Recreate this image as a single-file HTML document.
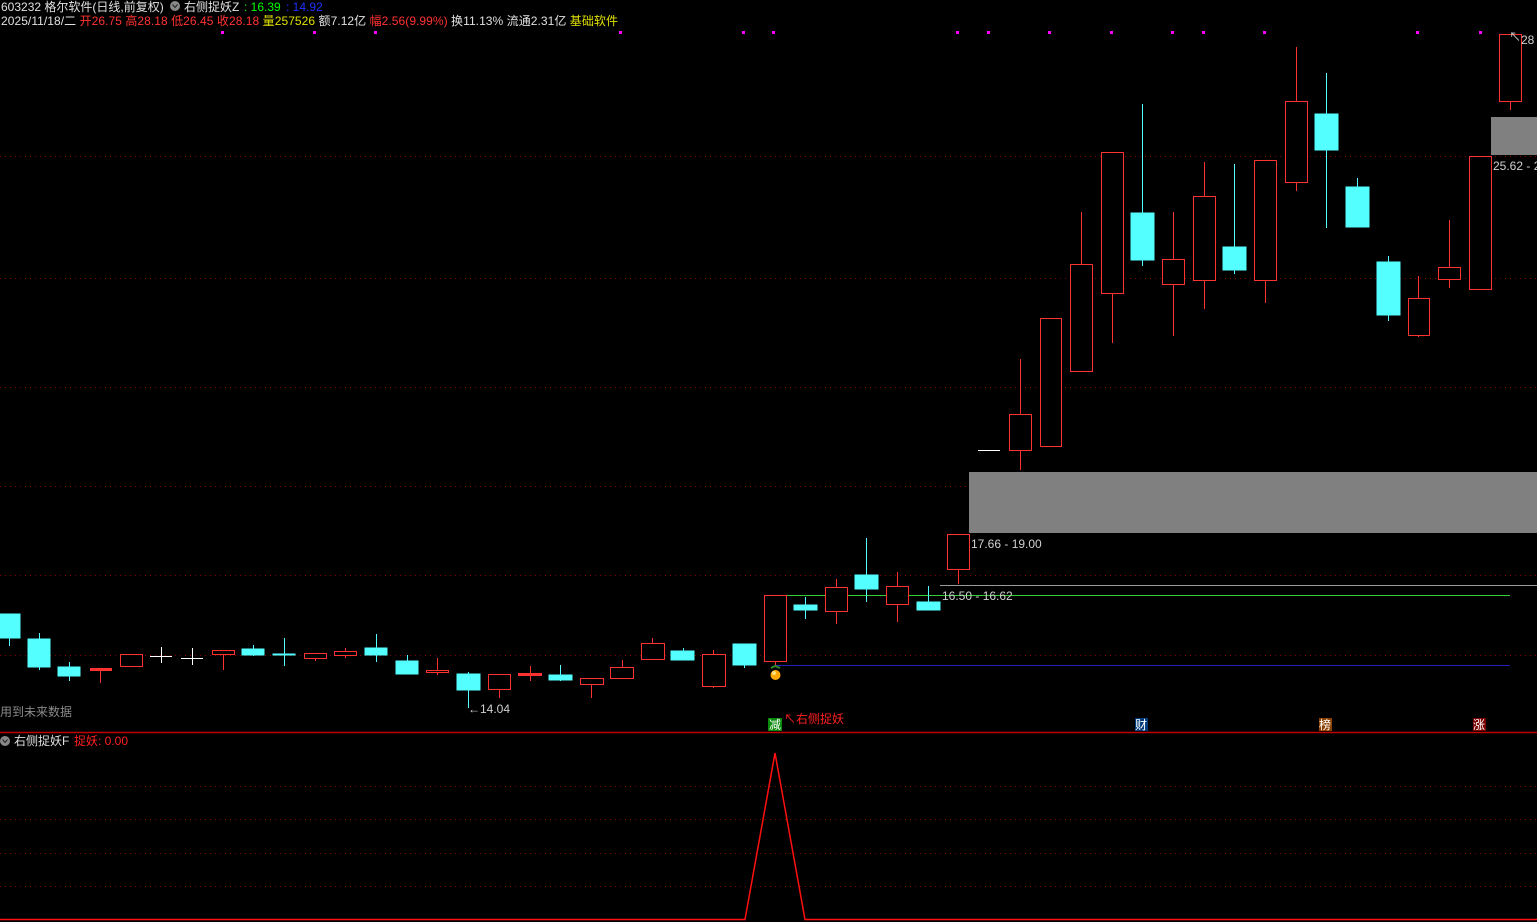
<!DOCTYPE html>
<html><head><meta charset="utf-8"><style>
html,body{margin:0;padding:0;background:#000;width:1537px;height:922px;overflow:hidden}
svg{display:block}
text{font-family:"Liberation Sans","Noto Sans CJK SC",sans-serif;font-size:12px}
</style></head><body>
<svg width="1537" height="922" xmlns="http://www.w3.org/2000/svg">
<g stroke="#800000" stroke-dasharray="1,4" stroke-width="1">
<line x1="0" y1="156.5" x2="1537" y2="156.5"/><line x1="0" y1="278.5" x2="1537" y2="278.5"/>
<line x1="0" y1="387.5" x2="1537" y2="387.5"/><line x1="0" y1="486.5" x2="1537" y2="486.5"/>
<line x1="0" y1="575.5" x2="1537" y2="575.5"/><line x1="0" y1="655.5" x2="1537" y2="655.5"/>
<line x1="0" y1="786.5" x2="1537" y2="786.5"/><line x1="0" y1="819.5" x2="1537" y2="819.5"/>
<line x1="0" y1="853.5" x2="1537" y2="853.5"/><line x1="0" y1="886.5" x2="1537" y2="886.5"/>
</g>
<rect x="969" y="472" width="568" height="61" fill="#808080"/>
<rect x="1491" y="117" width="46" height="38" fill="#808080"/>
<line x1="940" y1="585.5" x2="1537" y2="585.5" stroke="#9a9a9a"/>
<line x1="775" y1="595.5" x2="1510" y2="595.5" stroke="#33cc33"/>
<line x1="775" y1="665.5" x2="1510" y2="665.5" stroke="#2222bb"/>
<g fill="#ff00ff">
<rect x="221" y="31" width="3" height="3"/><rect x="313" y="31" width="3" height="3"/><rect x="374" y="31" width="3" height="3"/><rect x="619" y="31" width="3" height="3"/><rect x="742" y="31" width="3" height="3"/><rect x="772" y="31" width="3" height="3"/><rect x="956" y="31" width="3" height="3"/><rect x="987" y="31" width="3" height="3"/><rect x="1048" y="31" width="3" height="3"/><rect x="1110" y="31" width="3" height="3"/><rect x="1171" y="31" width="3" height="3"/><rect x="1202" y="31" width="3" height="3"/><rect x="1263" y="31" width="3" height="3"/><rect x="1416" y="31" width="3" height="3"/><rect x="1479" y="31" width="3" height="3"/>
</g>
<g stroke="#54ffff" fill="#54ffff">
<line x1="9.5" y1="614" x2="9.5" y2="646"/><rect x="0" y="614" width="20" height="24"/>
<line x1="39.5" y1="633" x2="39.5" y2="670"/><rect x="28" y="639" width="22" height="28"/>
<line x1="69.5" y1="662" x2="69.5" y2="681"/><rect x="58" y="667" width="22" height="9"/>
<line x1="253.5" y1="645" x2="253.5" y2="656"/><rect x="242" y="649" width="22" height="6"/>
<line x1="284.5" y1="638" x2="284.5" y2="666"/><rect x="273" y="654" width="22" height="1"/>
<line x1="376.5" y1="634" x2="376.5" y2="662"/><rect x="365" y="648" width="22" height="7"/>
<line x1="407.5" y1="655" x2="407.5" y2="674"/><rect x="396" y="661" width="22" height="13"/>
<line x1="468.5" y1="672" x2="468.5" y2="708"/><rect x="457" y="674" width="23" height="16"/>
<line x1="560.5" y1="665" x2="560.5" y2="681"/><rect x="549" y="675" width="23" height="5"/>
<line x1="683.5" y1="648" x2="683.5" y2="660"/><rect x="671" y="651" width="23" height="9"/>
<line x1="744.5" y1="644" x2="744.5" y2="668"/><rect x="733" y="644" width="23" height="21"/>
<line x1="805.5" y1="597" x2="805.5" y2="619"/><rect x="794" y="605" width="23" height="5"/>
<line x1="866.5" y1="538" x2="866.5" y2="602"/><rect x="855" y="575" width="23" height="14"/>
<line x1="928.5" y1="586" x2="928.5" y2="610"/><rect x="917" y="602" width="23" height="8"/>
<line x1="1142.5" y1="104" x2="1142.5" y2="266"/><rect x="1131" y="213" width="23" height="47"/>
<line x1="1234.5" y1="164" x2="1234.5" y2="274"/><rect x="1223" y="247" width="23" height="23"/>
<line x1="1326.5" y1="73" x2="1326.5" y2="228"/><rect x="1315" y="114" width="23" height="36"/>
<line x1="1357.5" y1="178" x2="1357.5" y2="227"/><rect x="1346" y="187" width="23" height="40"/>
<line x1="1388.5" y1="256" x2="1388.5" y2="321"/><rect x="1377" y="262" width="23" height="53"/>
</g>
<g stroke="#ff3232" fill="#000">
<line x1="100.5" y1="669" x2="100.5" y2="683"/><rect x="90.5" y="668.5" width="21" height="2" fill="#ff3232"/>
<rect x="120.5" y="654.5" width="22" height="12"/>
<line x1="223.5" y1="650" x2="223.5" y2="670"/><rect x="212.5" y="650.5" width="22" height="4"/>
<line x1="315.5" y1="653" x2="315.5" y2="661"/><rect x="304.5" y="653.5" width="22" height="5"/>
<line x1="345.5" y1="648" x2="345.5" y2="658"/><rect x="334.5" y="651.5" width="22" height="4"/>
<line x1="437.5" y1="658" x2="437.5" y2="675"/><rect x="426.5" y="670.5" width="22" height="2"/>
<line x1="499.5" y1="690" x2="499.5" y2="698"/><rect x="488.5" y="674.5" width="22" height="15"/>
<line x1="530.5" y1="666" x2="530.5" y2="681"/><rect x="518.5" y="673.5" width="23" height="2" fill="#ff3232"/>
<line x1="591.5" y1="685" x2="591.5" y2="698"/><rect x="580.5" y="678.5" width="23" height="6"/>
<line x1="622.5" y1="660" x2="622.5" y2="667"/><rect x="610.5" y="667.5" width="23" height="11"/>
<line x1="652.5" y1="638" x2="652.5" y2="643"/><rect x="641.5" y="643.5" width="23" height="16"/>
<line x1="713.5" y1="650" x2="713.5" y2="688"/><rect x="702.5" y="654.5" width="23" height="32"/>
<line x1="775.5" y1="661" x2="775.5" y2="665"/><rect x="764.5" y="595.5" width="22" height="66"/>
<line x1="836.5" y1="579" x2="836.5" y2="624"/><rect x="825.5" y="587.5" width="22" height="24"/>
<line x1="897.5" y1="572" x2="897.5" y2="622"/><rect x="886.5" y="586.5" width="22" height="18"/>
<line x1="958.5" y1="569" x2="958.5" y2="584"/><rect x="947.5" y="534.5" width="22" height="35"/>
<line x1="1020.5" y1="359" x2="1020.5" y2="470"/><rect x="1009.5" y="414.5" width="22" height="36"/>
<rect x="1040.5" y="318.5" width="21" height="128"/>
<line x1="1081.5" y1="212" x2="1081.5" y2="264"/><rect x="1070.5" y="264.5" width="22" height="107"/>
<line x1="1112.5" y1="293" x2="1112.5" y2="343"/><rect x="1101.5" y="152.5" width="22" height="141"/>
<line x1="1173.5" y1="212" x2="1173.5" y2="336"/><rect x="1162.5" y="259.5" width="22" height="25"/>
<line x1="1204.5" y1="162" x2="1204.5" y2="309"/><rect x="1193.5" y="196.5" width="22" height="84"/>
<line x1="1265.5" y1="280" x2="1265.5" y2="303"/><rect x="1254.5" y="160.5" width="22" height="120"/>
<line x1="1296.5" y1="47" x2="1296.5" y2="191"/><rect x="1285.5" y="101.5" width="22" height="81"/>
<line x1="1418.5" y1="276" x2="1418.5" y2="337"/><rect x="1408.5" y="298.5" width="21" height="37"/>
<line x1="1449.5" y1="220" x2="1449.5" y2="288"/><rect x="1438.5" y="267.5" width="22" height="12"/>
<rect x="1469.5" y="156.5" width="22" height="133"/>
<line x1="1510.5" y1="101" x2="1510.5" y2="110"/><rect x="1499.5" y="34.5" width="22" height="67"/>
</g>
<g stroke="#ffffff">
<line x1="161.5" y1="647" x2="161.5" y2="663"/><line x1="150" y1="656.5" x2="172" y2="656.5"/>
<line x1="192.5" y1="648" x2="192.5" y2="665"/><line x1="181" y1="658.5" x2="203" y2="658.5"/>
<line x1="978" y1="450.5" x2="1000" y2="450.5"/>
</g>
<circle cx="775.5" cy="675" r="5" fill="#ffaa00"/><circle cx="774" cy="673" r="2" fill="#ffe080"/>
<path d="M771 668 L775 666 L780 668" stroke="#2a8a2a" fill="none" stroke-width="2"/>
<g fill="#d0d0d0">
<text x="971" y="548">17.66 - 19.00</text>
<text x="942" y="600">16.50 - 16.62</text>
<text x="1493" y="170">25.62 - 2</text>
<text x="1521" y="44">28</text>
<text x="468" y="713">←14.04</text>
</g>
<text x="1509" y="41" fill="#d0d0d0" font-size="10">↖</text>
<text x="0" y="716" fill="#8a8a8a">用到未来数据</text>
<text x="784" y="723" fill="#ff2020">↖右侧捉妖</text>
<rect x="768" y="718" width="14" height="13" fill="#0a8a0a"/><text x="769" y="729" fill="#fff" font-size="11">减</text>
<rect x="1135" y="718" width="13" height="13" fill="#003a7a"/><text x="1135" y="729" fill="#fff" font-size="11">财</text>
<rect x="1319" y="718" width="13" height="13" fill="#8a4000"/><text x="1319" y="729" fill="#fff" font-size="11">榜</text>
<rect x="1473" y="718" width="13" height="13" fill="#7a0000"/><text x="1473" y="729" fill="#fff" font-size="11">涨</text>
<rect x="0" y="731" width="1537" height="20" fill="#000"/>
<line x1="0" y1="732.5" x2="1537" y2="732.5" stroke="#c00000" stroke-width="1.5"/>
<circle cx="5" cy="741" r="5" fill="#888"/><path d="M2.5 739.5 L5 742.5 L7.5 739.5" stroke="#222" fill="none"/>
<text x="14" y="745" fill="#e0e0e0">右侧捉妖F</text><text x="74" y="745" fill="#ff2020">捉妖: 0.00</text>
<polyline points="0,919.5 745,919.5 775,753 805,919.5 1537,919.5" fill="none" stroke="#ff1010" stroke-width="1.5"/>
<text x="1" y="11" fill="#e0e0e0">603232 格尔软件(日线,前复权)</text>
<circle cx="175" cy="6" r="5" fill="#888"/><path d="M172.5 4.5 L175 7.5 L177.5 4.5" stroke="#222" fill="none"/>
<text x="184" y="11" fill="#e0e0e0">右侧捉妖Z</text><text x="244" y="11" fill="#00ff00">: 16.39</text><text x="286" y="11" fill="#2030ff">: 14.92</text>
<text x="1" y="25" textLength="617" lengthAdjust="spacing"><tspan fill="#e0e0e0">2025/11/18/二 </tspan><tspan fill="#ff3232">开26.75 高28.18 低26.45 收28.18 </tspan><tspan fill="#e0e000">量257526 </tspan><tspan fill="#e0e0e0">额7.12亿 </tspan><tspan fill="#ff3232">幅2.56(9.99%) </tspan><tspan fill="#e0e0e0">换11.13% 流通2.31亿 </tspan><tspan fill="#e0e000">基础软件</tspan></text>
</svg>
</body></html>
